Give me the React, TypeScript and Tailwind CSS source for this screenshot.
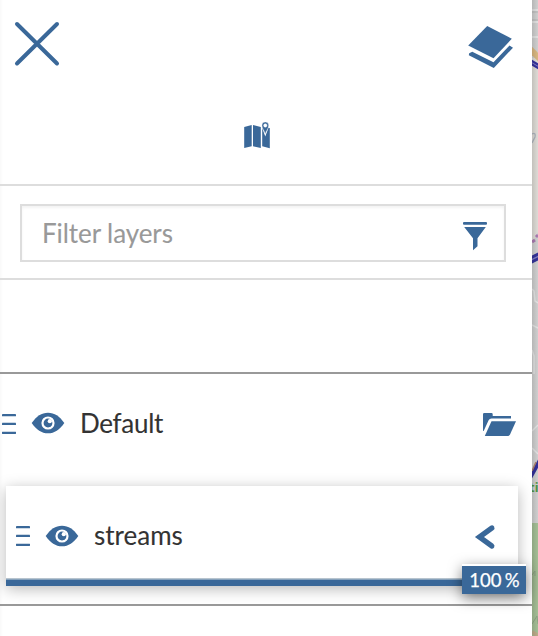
const BLUE = "#3a6899";

function Grip() {
  return (
    <svg width="14" height="20" viewBox="0 0 14 20" fill={BLUE} className="shrink-0">
      <rect y="0" width="14" height="2.300" rx=".4" />
      <rect y="8.800" width="14" height="2.300" rx=".4" />
      <rect y="17.700" width="14" height="2.300" rx=".4" />
    </svg>
  );
}

function Eye() {
  return (
    <svg width="34" height="22" viewBox="0 0 34 22" className="shrink-0">
      <path d="M.7 11C5.5 4.200 10.500.7 17 .7S28.500 4.200 33.300 11C28.500 17.800 23.500 21.300 17 21.300S5.500 17.800.7 11Z" fill={BLUE} />
      <circle cx="17" cy="11" r="5.500" fill={BLUE} stroke="#fff" strokeWidth="2.200" />
      <path d="M17.300 7.200A3.900 3.900 0 1 0 21 11.400A2.600 2.600 0 0 1 17.300 7.200Z" fill={BLUE} />
      <circle cx="18.800" cy="9.200" r="2.100" fill="#fff" />
    </svg>
  );
}

function MapStrip() {
  return (
    <svg width="6" height="636" viewBox="0 0 6 636" className="block shrink-0">
      <defs>
        <linearGradient id="edge" x1="0" x2="1" y1="0" y2="0">
          <stop offset="0" stopColor="#000" stopOpacity=".18" />
          <stop offset="1" stopColor="#000" stopOpacity=".07" />
        </linearGradient>
      </defs>
      <rect width="6" height="636" fill="#dedede" />
      <path d="M0 58H6V232L0 244Z" fill="#eeebe5" />
      <path d="M0 10H6M0 22H6M0 37H6" stroke="#f7f7f7" strokeWidth="1.500" />
      <path d="M0 12H6M0 20H6" stroke="#b8b8b8" strokeWidth=".7" />
      <path d="M-3 48L9 60" stroke="#e9c58b" strokeWidth="6" />
      <path d="M-3 61L9 68" stroke="#3935a8" strokeWidth="5" />
      <path d="M-3 61L9 68" stroke="#8f8cd4" strokeWidth="1" />
      <path d="M0 134Q4 132 3 137L0 143" fill="none" stroke="#b9c1cb" strokeWidth="1.300" />
      <path d="M0 242L3 240M4 237L6 235" stroke="#b683bd" strokeWidth="3" />
      <path d="M-3 261L9 255" stroke="#3836a4" strokeWidth="7" />
      <path d="M-3 261L9 255" stroke="#8c8bd1" strokeWidth="1.500" />
      <path d="M0 289L2 291L3 301L6 303M0 325L6 328M0 350L2 356V372M2 360V374M0 431L6 425M0 448L6 454" fill="none" stroke="#f4f4f4" strokeWidth="1.500" />
      <path d="M-2 478L8 460" stroke="#3633a4" strokeWidth="4" />
      <path d="M0 471L4 462" stroke="#bb8b72" strokeWidth="1.500" />
      <rect y="523" width="6" height="113" fill="#b0cca0" />
      <text x="-3" y="492" fontSize="13" fontFamily="Noto Sans" fontWeight="700" fill="#57a24b">ti</text>
      <path d="M0 575L3 571V576M0 624L5 616L6 624" fill="none" stroke="#98af8e" />
      <path d="M0 632L6 636" stroke="#c9b893" strokeWidth="4" />
      <rect width="6" height="636" fill="url(#edge)" />
    </svg>
  );
}

export default function App() {
  return (
    <div className="flex h-[636px] w-[538px] overflow-hidden bg-white font-['Lato',sans-serif] text-[#333]">
      <main className="w-[532px] shrink-0 bg-[linear-gradient(to_right,#f9f9f9,#fff_3px)]">
        <header className="h-[186px] border-b-2 border-[#ddd]">
          <div className="flex h-[90px] justify-between pt-5 pr-[18px] pl-[13px]">
            <svg width="48" height="48" viewBox="0 0 48 48" stroke={BLUE} strokeWidth="4" strokeLinecap="round">
              <path d="M4 4L44 43.500M44 4L4 43.500" />
            </svg>
            <svg width="46" height="50" viewBox="0 0 46 50" fill={BLUE}>
              <path d="M19.200 6L43.800 18.700L25.500 38.300L.2 25.500Z" />
              <path d="M4.300 31.700L25.500 42.300L41.500 25.600L45 27.700L25.800 48L.8 35.200L1.200 33.200Z" />
            </svg>
          </div>
          <div className="flex justify-center pt-[31px]">
            <svg width="28" height="28" viewBox="0 0 28 28" fill={BLUE} className="mr-[18px]">
              <path d="M1.200 6L8.700 4V25.200L1.200 27ZM10 4L17.800 6V27L10 25.200Z" />
              <path d="M19.200 6.800C20 9.500 21 12 22.300 15.500C23.600 12 24.500 10 25.300 7H26.800V27.200L19.200 25.300Z" />
              <path fillRule="evenodd" d="M22.300.9A3.400 3.400 0 0 0 18.900 4.300C18.900 7.500 21.200 9.200 22.300 13C23.400 9.200 25.700 7.500 25.700 4.300A3.400 3.400 0 0 0 22.300.9ZM22.300 2.800A1.700 1.700 0 1 1 22.300 6.200A1.700 1.700 0 0 1 22.300 2.800Z" stroke="#fff" strokeWidth=".4" />
            </svg>
          </div>
        </header>

        <section className="h-[94px] border-b-2 border-[#ddd] pt-[18px] pl-5">
          <div className="flex h-[58px] w-[486px] items-center justify-between border-2 border-[#ddd] bg-white pr-[17px] pl-5 shadow-[inset_0_2px_3px_rgba(0,0,0,0.05)]">
            <span className="text-[26px] leading-8 tracking-[-0.07px] text-[#999] [-webkit-text-stroke:0.1px_#999]">Filter layers</span>
            <svg width="24" height="30" viewBox="0 0 24 30" fill={BLUE} className="mt-[5px]">
              <rect y="1" width="24" height="2.800" rx="1" />
              <path d="M1.200 6H22.800L14.500 17.200V25.200L10 29.200V17.200Z" />
            </svg>
          </div>
        </section>

        <div className="h-[94px] border-b-2 border-[#999]" />

        <section className="h-[232px] border-b-2 border-[#999]">
          <div className="flex h-[112px] items-center pr-4 pb-3 pl-0.5">
            <Grip />
            <span className="ml-[15px] -mt-0.5"><Eye /></span>
            <span className="-mt-0.5 ml-[15px] text-[26px] leading-8 tracking-[-0.3px] [-webkit-text-stroke:0.1px_#333]">Default</span>
            <svg width="34" height="26" viewBox="0 0 34 26" fill={BLUE} className="ml-auto">
              <path d="M1 20V3.200Q1 2 2.200 2H9.500Q10.700 2 10.700 3.200V5H29V7.400H9.500Q7.500 7.400 6.600 9.200L1.800 19.800Z" />
              <path d="M9.500 10.200H34L28 23.500Q27.300 25 25.800 25H2.800Z" />
            </svg>
          </div>
          <div className="relative ml-1.5 flex h-[100px] w-[512px] items-center border-b-[6px] border-[#3a6899] bg-white pr-[22px] pl-2.5 shadow-[0_3px_14px_rgba(0,0,0,0.28)]">
            <span className="mt-1.5"><Grip /></span>
            <span className="ml-[15px] mt-[5px]"><Eye /></span>
            <span className="ml-[15px] mt-[3px] text-[26px] leading-8 [-webkit-text-stroke:0.1px_#333]">streams</span>
            <svg width="22" height="26" viewBox="0 0 22 26" fill={BLUE} stroke="none" className="mt-2 ml-auto">
              <path d="M.9 13L16.400 1.700Q18.500.4 20.100 2.400Q21.300 4.600 19.300 6.200L10 13L19.300 19.800Q21.300 21.400 20.100 23.600Q18.500 25.600 16.400 24.300Z" />
            </svg>
            <div className="absolute inset-x-0 bottom-0 h-0.5 bg-[linear-gradient(#cfd5d8,#6f91b3)]" />
            <div className="absolute -right-2 -bottom-3.5 flex h-[30px] w-16 items-center justify-center border-t-2 border-white bg-[#3a6899] pl-px text-[18.500px] leading-6 [word-spacing:-1.500px] whitespace-pre text-white shadow-[0_4px_14px_rgba(0,0,0,0.5)] [-webkit-text-stroke:0.25px_#fff]">100 %</div>
          </div>
        </section>
      </main>
      <MapStrip />
    </div>
  );
}
